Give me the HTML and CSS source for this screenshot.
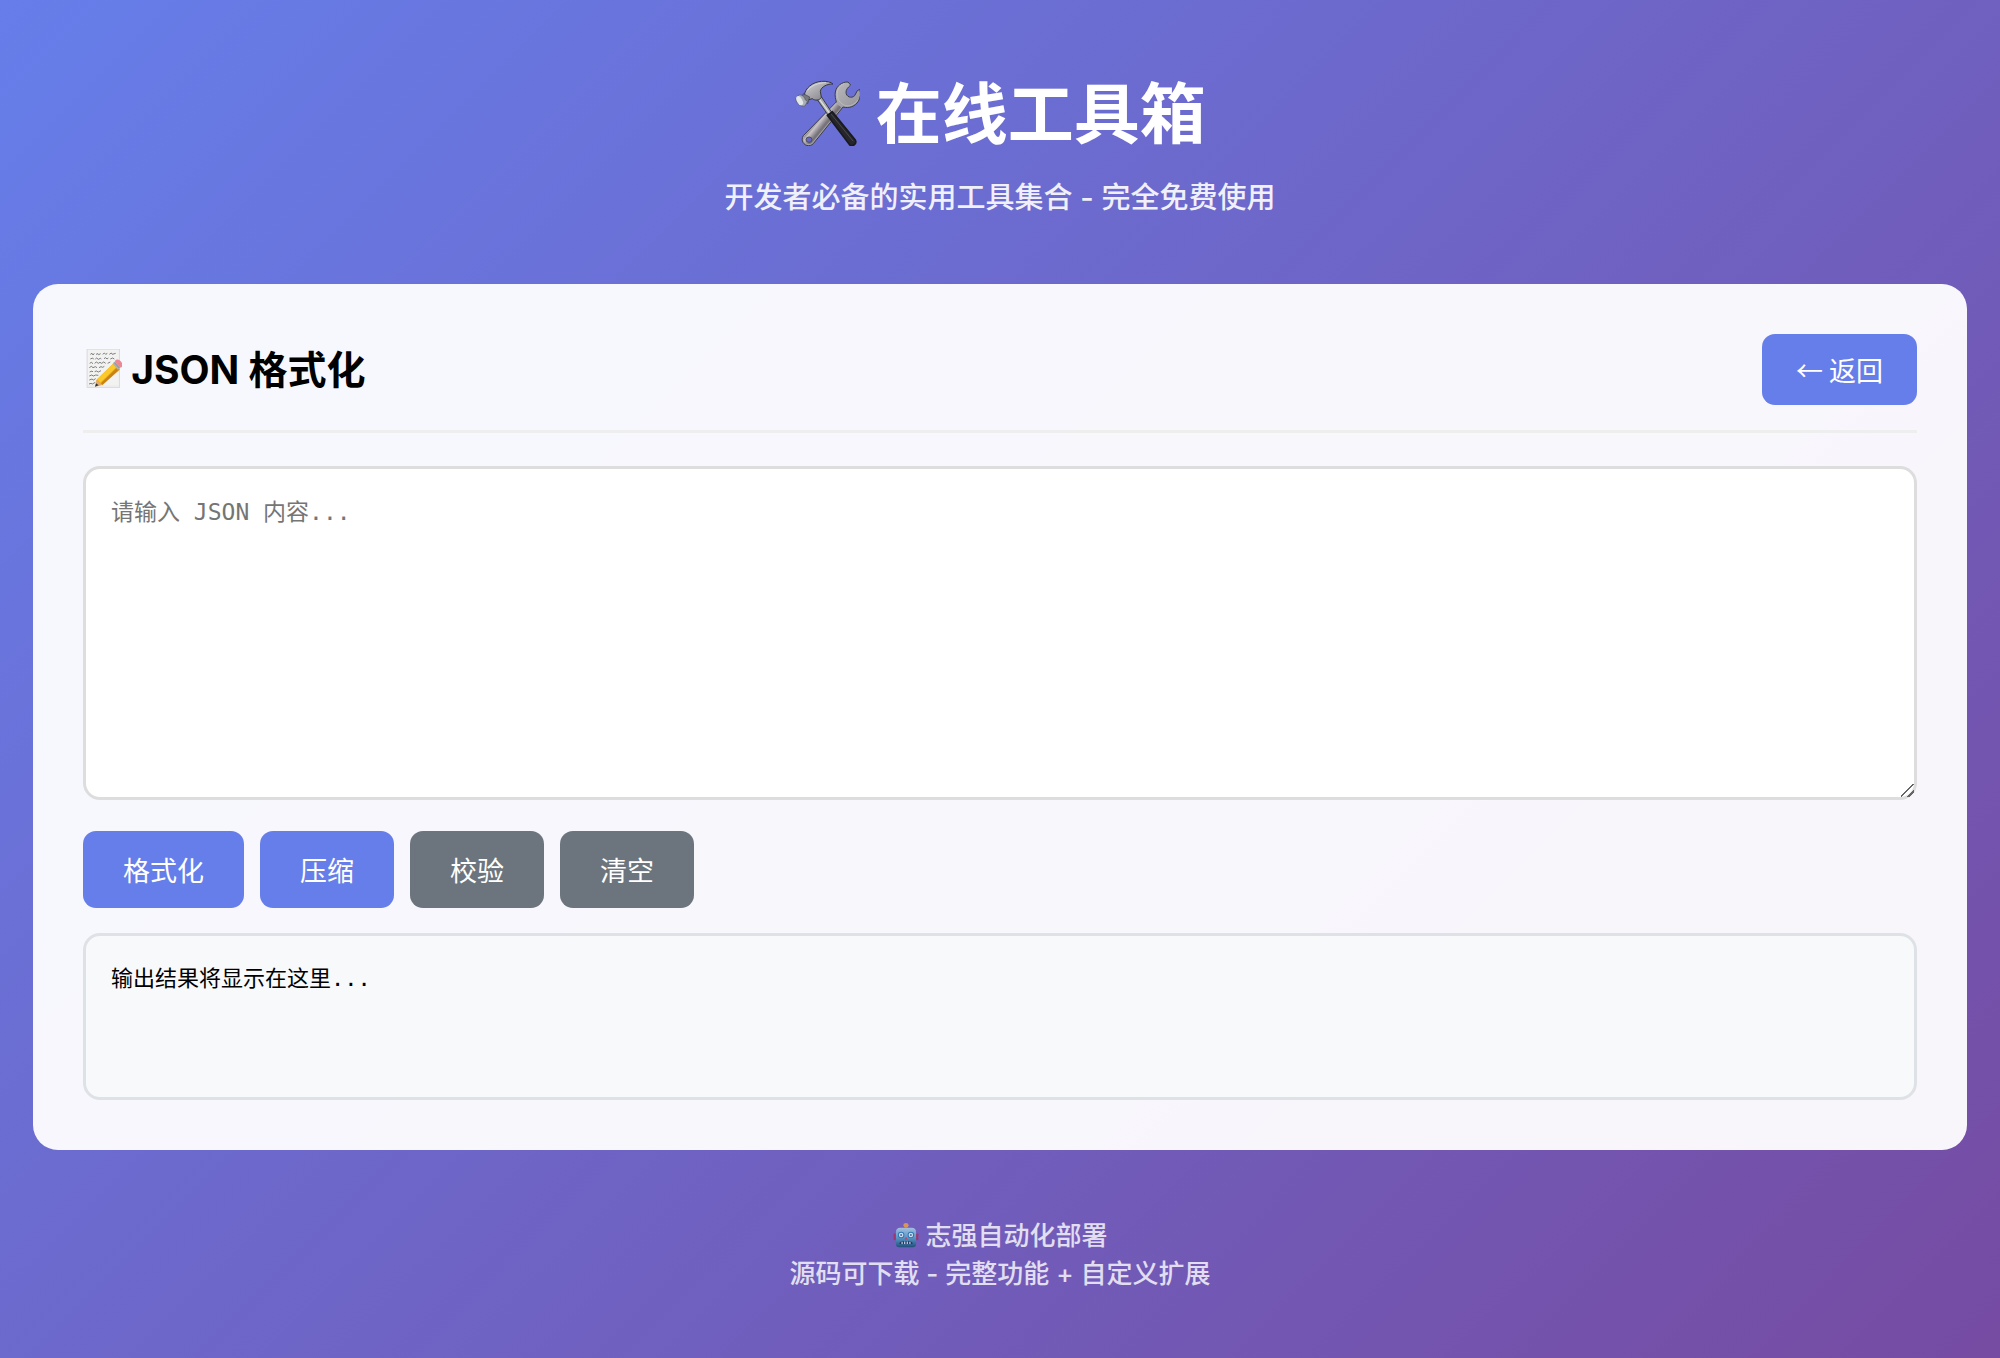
FILE: index.html
```html
<!DOCTYPE html>
<html lang="zh-CN">
<head>
  <meta charset="UTF-8">
  <meta name="viewport" content="width=device-width, initial-scale=1.0">
  <title>在线工具箱</title>
  <link rel="stylesheet" href="styles.css">
</head>
<body>
  <div class="container">
    <header class="header">
      <h1>
        <svg class="emoji" viewBox="36 25 198 198" aria-hidden="true">
          <defs>
            <linearGradient id="steel" x1="0" y1="0" x2="1" y2="1">
              <stop offset="0" stop-color="#d6d6da"/>
              <stop offset="0.5" stop-color="#a5a5aa"/>
              <stop offset="1" stop-color="#77777d"/>
            </linearGradient>
            <linearGradient id="shaft" gradientUnits="userSpaceOnUse" x1="98" y1="150" x2="120" y2="168">
              <stop offset="0" stop-color="#6d6a70"/>
              <stop offset="0.4" stop-color="#c9c5c8"/>
              <stop offset="1" stop-color="#77737a"/>
            </linearGradient>
          </defs>
          <!-- wrench -->
          <path d="M198 31 C180 30 163 43 160 61 C158 73 161 82 163 91 L64 192 C55 206 65 222 80 222 C88 222 93 218 98 211 L183 106 C201 111 220 104 229 89 C236 77 237 65 233 53 L226 57 L218 72 C208 82 192 75 192 62 C192 54 197 48 206 40 Z" fill="url(#steel)" stroke="#3d3c49" stroke-width="3"/>
          <path d="M161 95 L68 192 C61 203 67 216 80 217 C87 217 90 213 95 207 L178 107 Z" fill="url(#shaft)"/>
          <path d="M187 36 C170 43 164 57 166 73 C168 87 177 98 191 102 C205 105 219 98 228 84" fill="none" stroke="#c4c6c8" stroke-width="2"/>
          <ellipse cx="81" cy="204" rx="9" ry="8" fill="#6667c4" stroke="#4d4b58" stroke-width="3"/>
          <!-- hammer -->
          <path d="M101 77 L116 72 L149 122 L140 133 Z" fill="#a5a7aa" stroke="#3b3d47" stroke-width="3"/>
          <path d="M108 77 L143 125" stroke="#e0e2e1" stroke-width="4"/>
          <path d="M136 131 L151 120 L220 205 C225 215 215 225 204 221 Z" fill="#26262a" stroke="#191a20" stroke-width="5" stroke-linejoin="round"/>
          <path d="M148 128 L213 208" stroke="#48484e" stroke-width="3" stroke-linecap="round"/>
          <path d="M67 72 C68 50 92 31 118 29 C134 28 147 31 153 37 C137 36 117 45 115 59 L118 77 C112 88 98 87 91 81 L80 84 Z" fill="url(#steel)" stroke="#34363e" stroke-width="3"/>
          <path d="M77 56 C88 41 108 34 132 33" fill="none" stroke="#d5dada" stroke-width="3"/>
          <path d="M64 66 L83 76 L77 96 L58 86 Z" fill="#77797e" stroke="#3d3e49" stroke-width="2"/>
          <path d="M50 70 C58 67 68 76 70 84 L76 90 L69 103 C58 107 41 94 42 81 Z" fill="#a9afb3" stroke="#4d505a" stroke-width="2"/>
          <ellipse cx="53" cy="87" rx="8" ry="15" transform="rotate(-28 53 87)" fill="#e2e7e8"/>
        </svg>
        在线工具箱
      </h1>
      <p>开发者必备的实用工具集合 - 完全免费使用</p>
    </header>

    <main class="card">
      <div class="tool-header">
        <h2>
          <svg class="emoji" viewBox="-3 3 117 117" aria-hidden="true">
            <rect x="9" y="3" width="98" height="115" fill="#ececec" stroke="#d2d2d4" stroke-width="2"/>
            <rect x="12" y="6" width="92" height="106" fill="#f2f2f1"/>
            <g fill="none" stroke="#68686b" stroke-width="2.5">
              <path d="M19 19 l5-3 3 5 4-5 M36 19 l6-2 2 3 6-3 M56 19 l5-4 4 4 5-3 M76 19 l6-4 3 4 10-3"/>
              <path d="M19 33 l7-3 3 4 M34 33 l4-3 5 4 6-3 3 2 M60 32 l5-3 4 4 4-3 M79 33 l7-3 5 3"/>
              <path d="M17 46 l5-3 5 4 M32 46 l5-4 6 4 5-3 5 3 6-4 6 4 M71 46 l8-4"/>
              <path d="M16 59 l6-4 5 4 7-3 5 3 M45 59 l6-3 5 2 5-3"/>
              <path d="M17 72 l7-3 3 3 M32 71 l5-2 6 3 8-4"/>
              <path d="M16 84 l7-3 5 3 7-3 8 1"/>
              <path d="M16 96 l8-3 4 3 7-4"/>
              <path d="M15 108 l6-2 4 2 9-5"/>
            </g>
            <path d="M37 96 L89 46 L107 65 L55 111 L38 113 Z" fill="#e9a719"/>
            <path d="M39 94 L90 45 L100 55 L49 104 Z" fill="#fbc92c"/>
            <path d="M51 106 L101 57 L107 64 L55 111 Z" fill="#c98312"/>
            <path d="M37 96 L55 110 L34 116 Z" fill="#e0ac74"/>
            <path d="M36 106 L44 112 L33 116 Z" fill="#303033"/>
            <path d="M86 47 L94 40 L110 56 L102 66 Z" fill="#aeb2b4"/>
            <path d="M90 43 L107 61" stroke="#777c80" stroke-width="2"/>
            <path d="M92 40 C98 31 107 35 112 42 C118 49 117 56 110 59 Z" fill="#ed8793"/>
          </svg>
          JSON 格式化
        </h2>
        <button type="button" class="btn-back">← 返回</button>
      </div>

      <textarea class="input" id="jsonInput" aria-label="JSON 内容" placeholder="请输入 JSON 内容..."></textarea>

      <div class="buttons">
        <button type="button" class="btn">格式化</button>
        <button type="button" class="btn">压缩</button>
        <button type="button" class="btn secondary">校验</button>
        <button type="button" class="btn secondary">清空</button>
      </div>

      <div class="output" id="jsonOutput">输出结果将显示在这里...</div>
    </main>

    <footer class="footer">
      <p>
        <svg class="emoji" viewBox="0 0 80 80" aria-hidden="true">
          <defs>
            <linearGradient id="face" x1="0" y1="0" x2="0" y2="1">
              <stop offset="0" stop-color="#b0d8e8"/>
              <stop offset="0.5" stop-color="#55a5cb"/>
              <stop offset="1" stop-color="#0f4d6b"/>
            </linearGradient>
          </defs>
          <rect x="36" y="12" width="8" height="12" fill="#7c8899"/>
          <ellipse cx="40" cy="10" rx="8" ry="7" fill="#f5a23c"/>
          <rect x="2" y="35" width="7" height="21" rx="3" fill="#a8305a"/>
          <rect x="71" y="35" width="7" height="21" rx="3" fill="#a8305a"/>
          <path d="M9 32 Q9 18 22 18 H58 Q71 18 71 32 V68 Q71 78 61 78 H19 Q9 78 9 68 Z" fill="url(#face)"/>
          <circle cx="25" cy="40" r="10" fill="#1f7fb3"/>
          <circle cx="55" cy="40" r="10" fill="#1f7fb3"/>
          <circle cx="25" cy="40" r="7" fill="#e2fdff"/>
          <circle cx="55" cy="40" r="7" fill="#e2fdff"/>
          <circle cx="25" cy="40" r="3" fill="#4a6b8a"/>
          <circle cx="55" cy="40" r="3" fill="#4a6b8a"/>
          <path d="M40 45 L45 54 H35 Z" fill="#d13f50"/>
          <path d="M20 64 Q24 58 30 59 H50 Q56 58 60 64 V68 H20 Z" fill="#122d42"/>
          <path d="M28 61 V68 M36 60 V68 M44 60 V68 M52 61 V68" stroke="#d5e3e9" stroke-width="4"/>
        </svg>
        志强自动化部署
      </p>
      <p>源码可下载 - 完整功能 + 自定义扩展</p>
    </footer>
  </div>
</body>
</html>
```

FILE: styles.css
```css
* {
  margin: 0;
  padding: 0;
  box-sizing: border-box;
}

body {
  min-height: 100vh;
  padding: 33px;
  background: linear-gradient(135deg, #667eea 0%, #764ba2 100%);
  font-family: Inter, "Noto Sans CJK SC", sans-serif;
  font-weight: 500;
}

.emoji {
  width: 1em;
  height: 1em;
  vertical-align: -0.12em;
}

.header {
  padding: 33px 0 67px;
  text-align: center;
  color: white;
}

.header h1 {
  margin-bottom: 17px;
  font-size: 66px;
  line-height: 96px;
}

.header p {
  font-size: 29px;
  line-height: 38px;
  opacity: 0.9;
}

.card {
  padding: 50px;
  background: rgba(255, 255, 255, 0.95);
  border-radius: 25px;
}

.tool-header {
  display: flex;
  justify-content: space-between;
  align-items: center;
  margin-bottom: 33px;
  padding-bottom: 25px;
  border-bottom: 3px solid #eee;
}

.tool-header h2 {
  font-size: 39px;
  line-height: 48px;
}

.btn-back,
.btn {
  background: #667eea;
  color: white;
  border: none;
  border-radius: 13px;
  font-family: "Noto Sans CJK SC", sans-serif;
  font-size: 27px;
  font-weight: 400;
  line-height: 37px;
  cursor: pointer;
}

.btn-back {
  padding: 17px 34px;
}

.btn {
  padding: 20px 40px;
}

.btn.secondary {
  background: #6c757d;
}

.input,
.output {
  display: block;
  width: 100%;
  padding: 25px;
  border-radius: 17px;
  font-family: "DejaVu Sans Mono", "Noto Sans CJK SC", monospace;
  font-weight: 400;
  line-height: 36px;
}

.input {
  height: 334px;
  background: white;
  border: 3px solid #ddd;
  font-size: 23px;
  resize: vertical;
}

.input::-webkit-scrollbar {
  width: 17px;
}

.input::-webkit-resizer {
  background: linear-gradient(135deg, transparent 44%, #666 44%, #666 53%, transparent 53%, transparent 73%, #666 73%, #666 82%, transparent 82%) 2px 2px / 13px 13px no-repeat;
}

.buttons {
  display: flex;
  flex-wrap: wrap;
  gap: 16px;
  margin: 31px 0 25px;
}

.output {
  min-height: 167px;
  background: #f8f9fa;
  border: 3px solid #dee2e6;
  font-size: 22px;
  white-space: pre-wrap;
}

.footer {
  padding: 67px 0 33px;
  text-align: center;
  color: white;
  font-size: 26px;
  line-height: 38px;
  opacity: 0.8;
}
```
